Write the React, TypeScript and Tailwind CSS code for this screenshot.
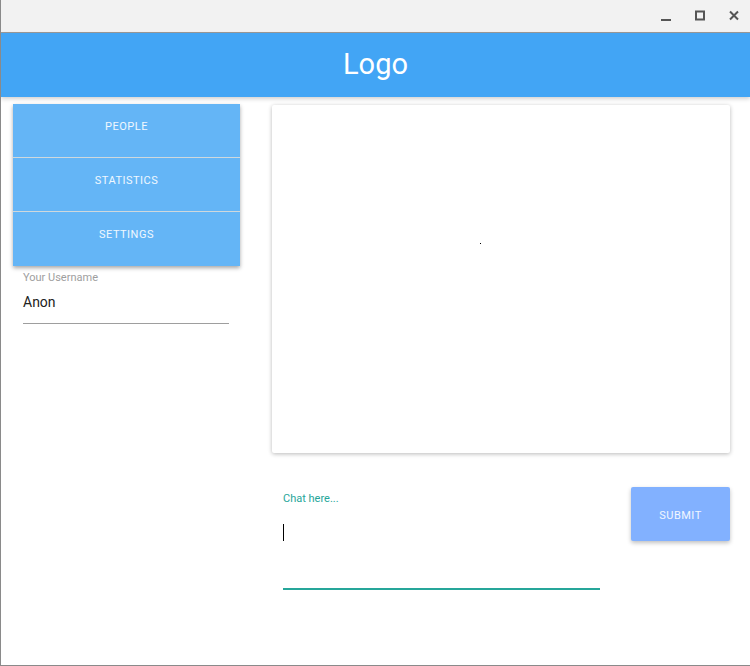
import React from 'react'

const WindowBar: React.FC = () => (
  <div className="flex h-[33px] items-center justify-end bg-[#f2f2f2] border-b border-[#9a9a9a] pr-[10px]">
    <div className="flex items-center gap-[22px] text-[#555]">
      <svg width="12" height="12" viewBox="0 0 12 12"><rect x="1" y="9" width="10" height="2" fill="#555" /></svg>
      <svg width="12" height="12" viewBox="0 0 12 12"><rect x="2" y="1.5" width="8" height="8" fill="none" stroke="#555" strokeWidth="2" /></svg>
      <svg width="12" height="12" viewBox="0 0 12 12"><path d="M2 1.5 L10 9.5 M10 1.5 L2 9.5" stroke="#555" strokeWidth="2" /></svg>
    </div>
  </div>
)

const App: React.FC = () => {
  const menu = ['PEOPLE', 'STATISTICS', 'SETTINGS']

  return (
    <div className="h-[666px] w-[750px] overflow-hidden bg-white border-l border-b border-[#8a8a8a] flex flex-col" style={{ fontFamily: 'Roboto, "Noto Sans", sans-serif' }}>
      <WindowBar />
      <header className="relative z-10 flex h-[64px] items-center justify-center bg-[#42a5f5] shadow-[0_2px_4px_rgba(0,0,0,0.18)]">
        <h1 className="text-[29px] text-white leading-none pb-[1px]">Logo</h1>
      </header>

      <div className="flex flex-1">
        <aside className="w-[259px] pl-[12px] pt-[7px]">
          <nav className="w-[227px] flex flex-col shadow-[0_2px_4px_rgba(0,0,0,0.35)]">
            {menu.map((item, i) => (
              <button
                key={item}
                className={`h-[54px] bg-[#64b5f6] text-white/90 text-[11px] tracking-[0.5px] pt-[15px] flex justify-center items-start ${i < menu.length - 1 ? 'border-b border-[#cfd8dc]' : ''}`}
              >
                {item}
              </button>
            ))}
          </nav>

          <div className="mt-[5px] pl-[10px] w-[216px]">
            <label className="block text-[11px] text-[#9e9e9e] leading-[14px]">Your Username</label>
            <div className="mt-[9px] text-[14px] text-[#212121] leading-[16px] pb-[13px] border-b border-[#9e9e9e]">Anon</div>
          </div>
        </aside>

        <main className="flex-1 pr-[20px] pt-[8px] pl-[12px]">
          <div className="h-[348px] bg-white rounded-[2px] shadow-[0_1px_4px_rgba(0,0,0,0.28)] relative">
            <span className="absolute left-[208px] top-[138px] w-[1px] h-[1px] bg-black" />
          </div>

          <div className="mt-[39px] flex justify-between">
            <div className="pl-[11px] w-[328px]">
              <label className="block text-[11px] text-[#26a69a] leading-[14px]">Chat here...</label>
              <div className="h-[84px] border-b-2 border-[#26a69a] pt-[18px]">
                <div className="w-[1px] h-[17px] bg-black" />
              </div>
            </div>
            <button className="w-[99px] h-[54px] mt-[-5px] pt-[4px] bg-[#82b1ff] rounded-[2px] text-white/90 text-[11px] tracking-[0.5px] shadow-[0_2px_4px_rgba(0,0,0,0.25)]">
              SUBMIT
            </button>
          </div>
        </main>
      </div>
    </div>
  )
}

export default App
